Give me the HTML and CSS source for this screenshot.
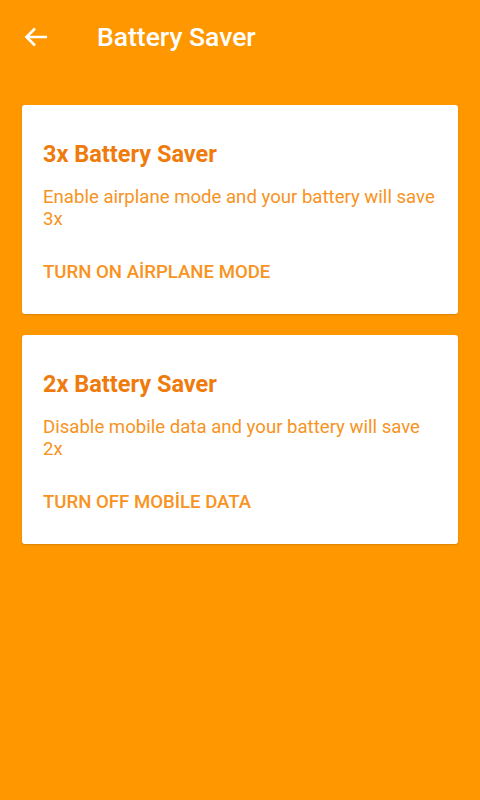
FILE: index.html
```html
<!DOCTYPE html>
<html lang="en">
<head>
    <meta charset="UTF-8">
    <title>Battery Saver</title>
    <link rel="stylesheet" href="styles.css">
</head>
<body>
    <div class="toolbar">
        <svg class="back" width="24" height="20" viewBox="0 0 24 20">
            <path d="M23 10H2.5M11 1.5L2.5 10L11 18.5" fill="none" stroke="#fff" stroke-width="2.6"/>
        </svg>
        <span class="toolbar-title">Battery Saver</span>
    </div>

    <div class="content">
        <div class="card">
            <div class="card-title">3x Battery Saver</div>
            <div class="card-text">Enable airplane mode and your battery will save 3x</div>
            <div class="card-action">TURN ON AİRPLANE MODE</div>
        </div>
        <div class="card">
            <div class="card-title">2x Battery Saver</div>
            <div class="card-text">Disable mobile data and your battery will save 2x</div>
            <div class="card-action">TURN OFF MOBİLE DATA</div>
        </div>
    </div>
</body>
</html>
```

FILE: styles.css
```css
body {
    margin: 0;
    padding: 0;
    height: 800px;
    background: #ff9800;
    font-family: Roboto, "Noto Sans", sans-serif;
}

.toolbar {
    height: 73px;
    display: flex;
    align-items: center;
    padding-left: 24px;
}

.back {
    width: 24px;
    height: 20px;
}

.toolbar-title {
    margin-left: 49px;
    color: #fff;
    font-size: 26.5px;
    font-weight: 500;
}

.content {
    padding: 32px 22px 0 22px;
    display: flex;
    flex-direction: column;
    gap: 21px;
}

.card {
    background: #fff;
    border-radius: 3px;
    padding: 34px 21px 31px 21px;
    box-shadow: 0 1px 2px rgba(0, 0, 0, 0.15);
}

.card-title {
    color: #ef7b0c;
    font-size: 23.5px;
    font-weight: 700;
    line-height: 30px;
}

.card-text {
    margin-top: 17px;
    color: #f7931e;
    font-size: 18.6px;
    line-height: 22px;
}

.card-action {
    margin-top: 31px;
    color: #f7931e;
    font-size: 18.6px;
    font-weight: 500;
    line-height: 22px;
}
```
